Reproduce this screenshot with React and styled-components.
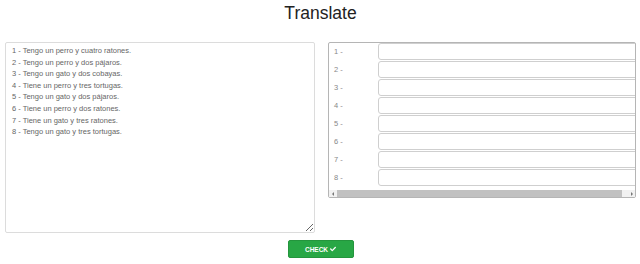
import React from "react";
import styled, { createGlobalStyle } from "styled-components";
import { FaCheck } from "react-icons/fa";

const GlobalStyle = createGlobalStyle`
  body {
    margin: 0;
    background: #fff;
    font-family: "Liberation Sans", Arial, sans-serif;
  }
`;

const Page = styled.div`
  padding: 0 4px 0 5px;
`;

const Title = styled.h1`
  margin: 0 0 17px;
  padding-top: 1px;
  font-size: 17.5px;
  line-height: 24px;
  font-weight: 400;
  color: #222;
  text-align: center;
`;

const Columns = styled.div`
  display: grid;
  grid-template-columns: 310px 308px;
  gap: 13px;
  align-items: start;
`;

const Source = styled.textarea`
  display: block;
  box-sizing: border-box;
  width: 310px;
  height: 191px;
  margin: 0;
  padding: 2px 6px;
  border: 1px solid #dcdcdc;
  border-radius: 2px;
  font-family: "Liberation Sans", Arial, sans-serif;
  font-size: 7.5px;
  line-height: 11.6px;
  color: #666;
  background: #fff;
  resize: both;
  outline: none;
`;

const Panel = styled.div`
  box-sizing: border-box;
  border: 1px solid #b5b5b5;
  border-radius: 2px;
  background: #fff;
`;

const Viewport = styled.div`
  overflow: hidden;
`;

const Rows = styled.div`
  display: flex;
  flex-direction: column;
  gap: 1px;
  width: max-content;
  padding: 0 0 4px 5px;
`;

const Row = styled.div`
  display: flex;
  align-items: center;
  height: 17px;
`;

const Label = styled.span`
  width: 44px;
  font-size: 7.5px;
  color: #888;
`;

const Answer = styled.input`
  box-sizing: border-box;
  width: 270px;
  height: 17px;
  margin: 0;
  padding: 0 4px;
  border: 1px solid #cfcfcf;
  border-radius: 3px;
  font-family: "Liberation Sans", Arial, sans-serif;
  font-size: 7.5px;
  background: #fff;
  outline: none;
`;

/* headless browser hides native scrollbars, so the bar is drawn */
const ScrollBar = styled.div`
  display: flex;
  height: 7px;
  background: #f1f1f1;
`;

const ScrollArrow = styled.div`
  width: 7px;
  display: flex;
  align-items: center;
  justify-content: center;

  &::before {
    content: "";
    width: 0;
    height: 0;
    border-top: 2px solid transparent;
    border-bottom: 2px solid transparent;
    ${({ $dir }) =>
      $dir === "left"
        ? "border-right: 2px solid #777;"
        : "border-left: 2px solid #777;"}
  }
`;

const ScrollTrack = styled.div`
  flex: 1;
  display: flex;
  align-items: stretch;
  padding: 0 0 0 1px;
`;

const ScrollThumb = styled.div`
  flex: 1;
  margin-right: 6px;
  background: #c1c1c1;
`;

const Actions = styled.div`
  display: flex;
  justify-content: center;
  padding-top: 7px;
`;

const CheckButton = styled.button`
  display: flex;
  align-items: center;
  justify-content: center;
  gap: 2px;
  width: 66px;
  height: 18px;
  padding: 0;
  border: 1px solid #24953d;
  border-radius: 2px;
  background: #28a745;
  color: #fff;
  font-family: "Liberation Sans", Arial, sans-serif;
  font-size: 6.5px;
  font-weight: 700;
  text-transform: uppercase;
  cursor: pointer;
`;

const sentences = [
  "Tengo un perro y cuatro ratones.",
  "Tengo un perro y dos pájaros.",
  "Tengo un gato y dos cobayas.",
  "Tiene un perro y tres tortugas.",
  "Tengo un gato y dos pájaros.",
  "Tiene un perro y dos ratones.",
  "Tiene un gato y tres ratones.",
  "Tengo un gato y tres tortugas.",
];

const App = () => {
  const text = sentences.map((s, i) => `${i + 1} - ${s}`).join("\n");

  return (
    <Page>
      <GlobalStyle />
      <Title>Translate</Title>
      <Columns>
        <Source defaultValue={text} spellCheck={false} />
        <Panel>
          <Viewport>
            <Rows>
              {sentences.map((_, i) => (
                <Row key={i}>
                  <Label>{i + 1} -</Label>
                  <Answer type="text" />
                </Row>
              ))}
            </Rows>
          </Viewport>
          <ScrollBar>
            <ScrollArrow $dir="left" />
            <ScrollTrack>
              <ScrollThumb />
            </ScrollTrack>
            <ScrollArrow $dir="right" />
          </ScrollBar>
        </Panel>
      </Columns>
      <Actions>
        <CheckButton>
          Check <FaCheck size={6} />
        </CheckButton>
      </Actions>
    </Page>
  );
};

export default App;
